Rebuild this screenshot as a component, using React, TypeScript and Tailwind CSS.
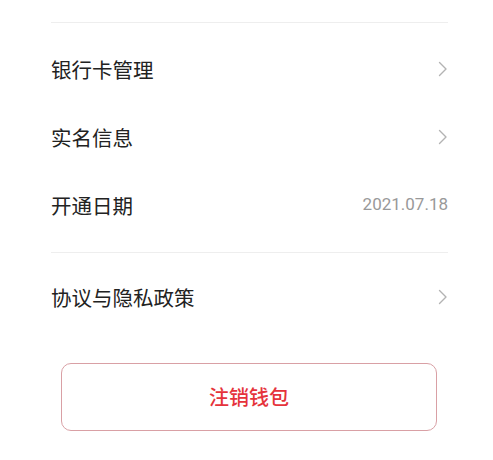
const cjk = { fontFamily: '"Noto Sans CJK SC", "Liberation Sans", sans-serif' }

function Chevron() {
  return (
    <svg width="10" height="16" viewBox="0 0 10 16" fill="none" className="shrink-0">
      <path d="M1.5 1.5 L8 8 L1.5 14.5" stroke="#b3b3b3" strokeWidth="1.4" strokeLinecap="round" strokeLinejoin="round" />
    </svg>
  )
}

function Row({ label, value, arrow }: { label: string; value?: string; arrow?: boolean }) {
  return (
    <div className="flex h-[68px] items-center justify-between">
      <span className="text-[20.5px] text-[#222]">{label}</span>
      {value ? (
        <span className="text-[17px] text-[#999]" style={{ fontFamily: '"Roboto", "Liberation Sans", sans-serif' }}>
          {value}
        </span>
      ) : null}
      {arrow ? <Chevron /> : null}
    </div>
  )
}

export default function App() {
  return (
    <div className="h-[460px] w-[493px] overflow-hidden bg-white" style={cjk}>
      <div className="pt-[22px] pl-[51px] pr-[45px]">
        <div className="h-px bg-[#eeeeee]" />
        <div className="pt-[12px]">
          <Row label="银行卡管理" arrow />
          <Row label="实名信息" arrow />
          <Row label="开通日期" value="2021.07.18" />
        </div>
        <div className="mt-[13px] h-px bg-[#eeeeee]" />
        <div className="pt-[10px]">
          <Row label="协议与隐私政策" arrow />
        </div>
      </div>
      <div className="mt-[32px] pl-[61px]">
        <button
          type="button"
          className="flex h-[68px] w-[376px] items-center justify-center rounded-[10px] border border-[#d9a0a5] text-[20px] font-medium text-[#e5333b]"
        >
          注销钱包
        </button>
      </div>
    </div>
  )
}
